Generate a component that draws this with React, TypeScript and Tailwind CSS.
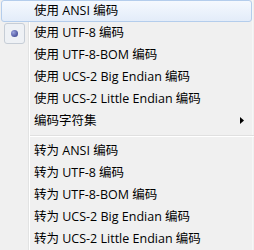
import React from 'react';

type Item = { label: string; checked?: boolean; hover?: boolean; submenu?: boolean };

const top: Item[] = [
  { label: '使用 ANSI 编码', hover: true },
  { label: '使用 UTF-8 编码', checked: true },
  { label: '使用 UTF-8-BOM 编码' },
  { label: '使用 UCS-2 Big Endian 编码' },
  { label: '使用 UCS-2 Little Endian 编码' },
  { label: '编码字符集', submenu: true },
];

const bottom: Item[] = [
  { label: '转为 ANSI 编码' },
  { label: '转为 UTF-8 编码' },
  { label: '转为 UTF-8-BOM 编码' },
  { label: '转为 UCS-2 Big Endian 编码' },
  { label: '转为 UCS-2 Little Endian 编码' },
];

const MenuRow: React.FC<{ item: Item }> = ({ item }) => (
  <div className="relative flex h-[22px] items-center">
    {/* survol */}
    {item.hover && (
      <div className="absolute left-[1px] right-[2px] top-0 bottom-0 rounded-[3px] border border-[#b4cdec] bg-gradient-to-b from-[#f5f9fe] to-[#e3ecf9]" />
    )}
    {/* case radio */}
    <div className="relative flex w-[34px] shrink-0 items-center">
      {item.checked && (
        <div className="ml-[4px] flex h-[21px] w-[21px] items-center justify-center rounded-[3px] border border-[#c6cdd6] bg-[#eef1f5]">
          <div className="h-[7px] w-[7px] rounded-full bg-[radial-gradient(circle_at_35%_35%,#9aa3de,#2a3282)]" />
        </div>
      )}
    </div>
    <span className="relative whitespace-nowrap text-[12.5px] text-black">{item.label}</span>
    {item.submenu && (
      <svg className="absolute right-[10px] top-[7px]" width="4" height="7" viewBox="0 0 4 7">
        <path d="M0 0 L4 3.5 L0 7 Z" fill="#000" />
      </svg>
    )}
  </div>
);

export default function App() {
  return (
    <div
      className="relative h-[250px] w-[254px] overflow-hidden bg-[#f0f0f0]"
      style={{ fontFamily: '"Open Sans", "Noto Sans CJK SC", sans-serif' }}
    >
      {/* gouttière */}
      <div className="absolute top-0 bottom-0 left-[28px] w-[1px] bg-[#e2e3e3]" />
      <div className="absolute top-0 bottom-0 left-[29px] w-[1px] bg-white" />
      <div className="absolute top-0 bottom-0 right-[1px] w-[1px] bg-[#f7f7f7]" />

      <div className="relative flex flex-col">
        {top.map((it) => (
          <MenuRow key={it.label} item={it} />
        ))}
        {/* séparateur */}
        <div className="flex h-[8px] flex-col justify-center pl-[30px]">
          <div className="h-[1px] bg-[#e0e0e0]" />
          <div className="h-[1px] bg-white" />
        </div>
        {bottom.map((it) => (
          <MenuRow key={it.label} item={it} />
        ))}
      </div>
    </div>
  );
}
